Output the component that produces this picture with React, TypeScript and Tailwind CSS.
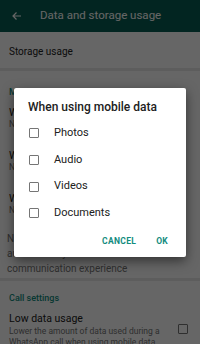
import React from "react";

const options = ["Photos", "Audio", "Videos", "Documents"];

const mediaRows = ["When using mobile data", "When connected on Wi-Fi", "When roaming"];

function Box({ className = "" }: { className?: string }) {
  return <span className={`block shrink-0 w-[10px] h-[10px] border-[1.5px] border-[#757575] rounded-[1px] ${className}`} />;
}

export default function App() {
  return (
    <div className="relative w-[200px] h-[344px] overflow-hidden bg-white font-['Roboto',sans-serif] text-[#212121]">
      <header className="h-8 bg-[#075e54] flex items-center pl-[11px] gap-[17px] text-white">
        <svg width="12" height="12" viewBox="0 0 24 24" fill="none" stroke="currentColor" strokeWidth="2.4">
          <path d="M20 12H5M11 5l-7 7 7 7" />
        </svg>
        <span className="text-[11.5px]">Data and storage usage</span>
      </header>

      <div className="h-[36px] flex items-center px-[9px] pt-[3px] text-[10px]">Storage usage</div>
      <div className="h-[3px] bg-[#e8e8e8]" />

      <div className="px-[9px] pt-[15px] text-[9px] leading-[12px] font-medium text-[#128c7e]">Media auto-download</div>
      {mediaRows.map((r) => (
        <div key={r} className="h-[43px] px-[9px] pt-[9px]">
          <div className="text-[10.5px] leading-[12px]">{r}</div>
          <div className="text-[8.5px] leading-[10px] text-[#757575]">No media</div>
        </div>
      ))}
      <div className="px-[7px] pt-[4px] text-[10px] leading-[15px] text-[#757575]">
        Note: Voice messages are always automatically downloaded for the best communication experience
      </div>
      <div className="h-[3px] bg-[#e8e8e8] mt-[2px]" />

      <div className="px-[9px] pt-[11px] text-[9px] leading-[12px] font-medium text-[#128c7e]">Call settings</div>
      <div className="flex items-start px-[9px] pt-[8px]">
        <div className="w-[160px]">
          <div className="text-[10.5px] leading-[14px]">Low data usage</div>
          <div className="text-[8.5px] leading-[11px] text-[#757575]">
            Lower the amount of data used during a WhatsApp call when using mobile data
          </div>
        </div>
        <Box className="ml-auto mt-[12px] mr-[3px]" />
      </div>

      <div className="absolute inset-0 bg-black/60" />

      <div className="absolute left-[14px] top-[88px] w-[172px] h-[169px] bg-white rounded-[2px] shadow-[0_4px_12px_rgba(0,0,0,0.5)]">
        <div className="pl-[14px] pt-[10px] text-[12px] leading-[18px] font-medium">When using mobile data</div>
        <div className="mt-[4px]">
          {options.map((o) => (
            <div key={o} className="h-[26.7px] flex items-center pl-[15px] gap-[15px]">
              <Box />
              <span className="text-[11px]">{o}</span>
            </div>
          ))}
        </div>
        <div className="flex justify-end gap-[20px] pr-[18px] pt-[8px] text-[8.5px] leading-[12px] font-bold text-[#128c7e] tracking-[0.3px]">
          <span>CANCEL</span>
          <span>OK</span>
        </div>
      </div>
    </div>
  );
}
